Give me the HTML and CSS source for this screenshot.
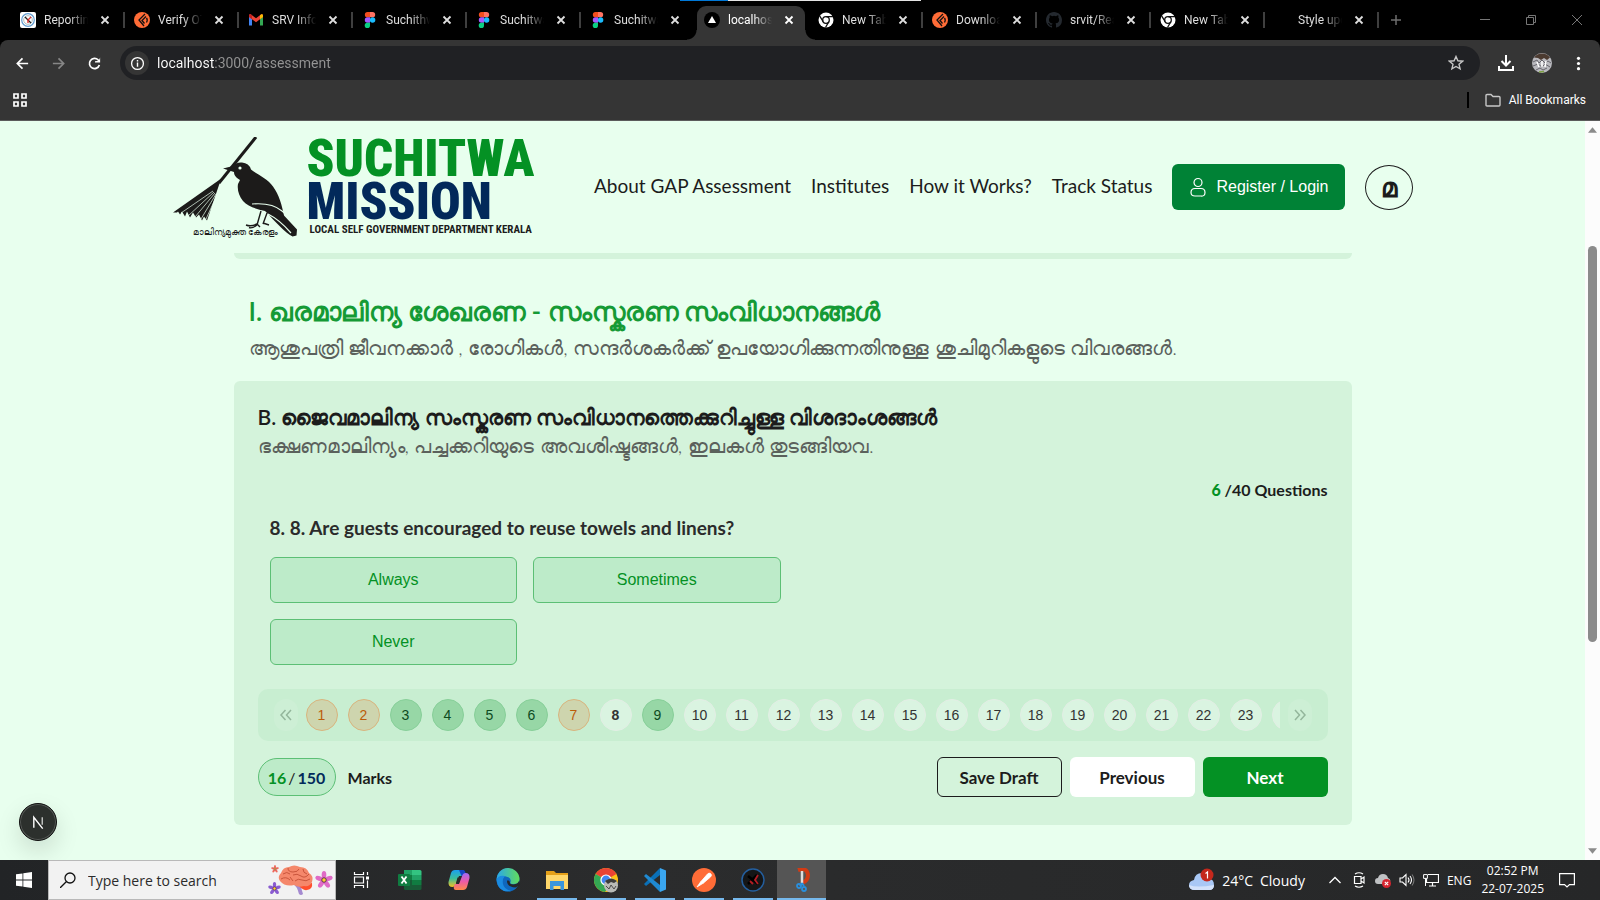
FILE: index.html
```html
<!DOCTYPE html>
<html lang="en">
<head>
<meta charset="utf-8">
<title>Suchitwa Mission - GAP Assessment</title>
<link rel="stylesheet" href="styles.css">
</head>
<body>
<svg class="defs" aria-hidden="true">
  <defs>
    <symbol id="i-close" viewBox="0 0 16 16"><path d="M4.5 4.5l7 7M11.500 4.500l-7 7" stroke="currentColor" stroke-width="1.800" fill="none"/></symbol>
    <symbol id="i-postman" viewBox="0 0 16 16"><circle cx="8" cy="8" r="8" fill="#ff6c37"/><path d="M11 2L5 8l5 6M12 4.500L8 8.500l2.500 3M12.500 6q1.500 2 0 4.500" stroke="#111" stroke-width="1.300" fill="none"/></symbol>
    <symbol id="i-figma" viewBox="0 0 16 16"><path d="M5.500 0H8v5.300H5.500a2.650 2.650 0 0 1 0-5.300z" fill="#f24e1e"/><path d="M8 0h2.500a2.650 2.650 0 0 1 0 5.300H8z" fill="#ff7262"/><path d="M5.500 5.300H8v5.400H5.500a2.700 2.700 0 0 1 0-5.400z" fill="#a259ff"/><circle cx="10.600" cy="8" r="2.700" fill="#1abcfe"/><path d="M5.500 10.700H8v2.600a2.650 2.650 0 1 1-2.500-2.600z" fill="#0acf83"/></symbol>
    <symbol id="i-chromew" viewBox="0 0 16 16"><circle cx="8" cy="8" r="7.500" fill="#fff"/><circle cx="8" cy="8" r="3.300" fill="none" stroke="#111" stroke-width="1.300"/><path d="M8 4.700h7M5.200 9.700L1.600 3.900M10.800 9.700L7.500 15.500" stroke="#111" stroke-width="1.300"/></symbol>
    <symbol id="i-gmail" viewBox="0 0 16 16"><path d="M1 4v9.500h3V7z" fill="#4285f4"/><path d="M15 4v9.500h-3V7z" fill="#34a853"/><path d="M1 3.500Q1 2 2.700 2.300L8 6.300l5.300-4Q15 2 15 3.500V5L8 10.200 1 5z" fill="#ea4335"/><path d="M12 3.300l1.300-1Q15 2 15 3.500V5l-3 2.300z" fill="#fbbc04"/><path d="M1 3.500Q1 2 2.700 2.300L4 3.300v4L1 5z" fill="#c5221f"/></symbol>
    <symbol id="i-chrome" viewBox="0 0 26 26"><circle cx="13" cy="13" r="12" fill="#fbc116"/><path d="M13 13L2.600 7A12 12 0 0 1 23.400 7z" fill="#ea4335"/><path d="M13 13L2.600 7A12 12 0 0 0 12 25l5-8z" fill="#34a853"/><circle cx="13" cy="13" r="5.600" fill="#fff"/><circle cx="13" cy="13" r="4.400" fill="#4285f4"/></symbol>
    <symbol id="i-flower" viewBox="0 0 20 20"><g fill="currentColor"><ellipse cx="10" cy="4.500" rx="2.600" ry="4.500"/><ellipse cx="10" cy="4.500" rx="2.600" ry="4.500" transform="rotate(72 10 10)"/><ellipse cx="10" cy="4.500" rx="2.600" ry="4.500" transform="rotate(144 10 10)"/><ellipse cx="10" cy="4.500" rx="2.600" ry="4.500" transform="rotate(216 10 10)"/><ellipse cx="10" cy="4.500" rx="2.600" ry="4.500" transform="rotate(288 10 10)"/></g><circle cx="10" cy="10" r="2.500" fill="#ffd02e" stroke="#4a2a50"/></symbol>
  </defs>
</svg>

<div class="titlebar">
  <div class="progress"></div>
  <div class="tab sep"><svg class="fav" viewBox="0 0 16 16"><rect width="16" height="16" rx="2" fill="#fff"/><circle cx="8" cy="8" r="6.300" fill="none" stroke="#5f9bd0" stroke-width="1.200"/><circle cx="8" cy="8" r="4.300" fill="none" stroke="#9aa" stroke-width=".8"/><path d="M5 5l6 6" stroke="#222" stroke-width="1.300"/><path d="M11 5L8 8v3" stroke="#d33" stroke-width="1.400" fill="none"/></svg><button class="name">Reporting</button><button class="x" aria-label="Close tab"><svg><use href="#i-close"/></svg></button></div>
  <div class="tab sep"><svg class="fav"><use href="#i-postman"/></svg><button class="name">Verify OTP</button><button class="x" aria-label="Close tab"><svg><use href="#i-close"/></svg></button></div>
  <div class="tab sep"><svg class="fav"><use href="#i-gmail"/></svg><button class="name">SRV Infotech</button><button class="x" aria-label="Close tab"><svg><use href="#i-close"/></svg></button></div>
  <div class="tab sep"><svg class="fav"><use href="#i-figma"/></svg><button class="name">Suchithwa</button><button class="x" aria-label="Close tab"><svg><use href="#i-close"/></svg></button></div>
  <div class="tab sep"><svg class="fav"><use href="#i-figma"/></svg><button class="name">Suchitwa</button><button class="x" aria-label="Close tab"><svg><use href="#i-close"/></svg></button></div>
  <div class="tab"><svg class="fav"><use href="#i-figma"/></svg><button class="name">Suchitwa</button><button class="x" aria-label="Close tab"><svg><use href="#i-close"/></svg></button></div>
  <div class="tab active"><svg class="fav" viewBox="0 0 16 16"><circle cx="8" cy="8" r="8" fill="#000"/><path d="M8 4l4 7H4z" fill="#fff"/></svg><button class="name">localhost</button><button class="x" aria-label="Close tab"><svg><use href="#i-close"/></svg></button></div>
  <div class="tab sep"><svg class="fav"><use href="#i-chromew"/></svg><button class="name">New Tab</button><button class="x" aria-label="Close tab"><svg><use href="#i-close"/></svg></button></div>
  <div class="tab sep"><svg class="fav"><use href="#i-postman"/></svg><button class="name">Download</button><button class="x" aria-label="Close tab"><svg><use href="#i-close"/></svg></button></div>
  <div class="tab sep"><svg class="fav" viewBox="0 0 16 16"><path fill="#24292f" d="M8 0C3.580 0 0 3.580 0 8c0 3.540 2.290 6.530 5.470 7.590.4.070.55-.17.55-.38v-1.490c-2.010.37-2.530-.49-2.690-.94-.09-.23-.48-.94-.82-1.130-.28-.15-.68-.52-.01-.53.63-.01 1.080.58 1.230.82.72 1.210 1.870.87 2.330.66.07-.52.28-.87.51-1.070-1.780-.2-3.640-.89-3.640-3.950 0-.87.31-1.590.82-2.150-.08-.2-.36-1.020.08-2.120 0 0 .67-.21 2.200.82a7.600 7.600 0 0 1 4 0c1.530-1.040 2.200-.82 2.200-.82.44 1.100.16 1.920.08 2.120.51.560.82 1.270.82 2.150 0 3.070-1.870 3.750-3.650 3.950.29.25.54.73.54 1.480v2.200c0 .21.15.46.55.38A8 8 0 0 0 16 8c0-4.420-3.580-8-8-8z"/></svg><button class="name">srvit/React</button><button class="x" aria-label="Close tab"><svg><use href="#i-close"/></svg></button></div>
  <div class="tab sep"><svg class="fav"><use href="#i-chromew"/></svg><button class="name">New Tab</button><button class="x" aria-label="Close tab"><svg><use href="#i-close"/></svg></button></div>
  <div class="tab sep"><svg class="fav"></svg><button class="name">Style update</button><button class="x" aria-label="Close tab"><svg><use href="#i-close"/></svg></button></div>
  <button class="newtab" aria-label="New tab"><svg viewBox="0 0 16 16"><path d="M8 3v10M3 8h10" stroke="currentColor" stroke-width="1.500"/></svg></button>
  <div class="winctl">
    <button aria-label="Minimize"><svg viewBox="0 0 12 12"><path d="M1 5.500h10" stroke="currentColor"/></svg></button>
    <button aria-label="Restore"><svg viewBox="0 0 12 12"><path d="M1.500 3.500h7v7h-7zM3.500 3.500v-2h7v7h-2" stroke="currentColor" fill="none"/></svg></button>
    <button aria-label="Close"><svg viewBox="0 0 12 12"><path d="M1 1l10 10M11 1L1 11" stroke="currentColor"/></svg></button>
  </div>
</div>

<div class="chrome">
  <div class="toolbar">
    <button class="tool" aria-label="Back"><svg viewBox="0 0 16 16"><path d="M14 8H3M8 2.500L2.500 8 8 13.500" stroke="#fff" stroke-width="1.800" fill="none"/></svg></button>
    <button class="tool" aria-label="Forward"><svg viewBox="0 0 16 16"><path d="M2 8h11M8 2.500L13.500 8 8 13.500" stroke="#868686" stroke-width="1.800" fill="none"/></svg></button>
    <button class="tool" aria-label="Reload"><svg viewBox="0 0 16 16"><path d="M13.200 9.500A5.400 5.400 0 1 1 12 4.300l1.300 1.400" stroke="#fff" stroke-width="1.800" fill="none"/><path d="M14 1.500V7H8.500V5.500L12.500 5z" fill="#fff"/></svg></button>
    <div class="omnibox">
      <span class="site"><svg viewBox="0 0 16 16"><circle cx="8" cy="8" r="6.300" stroke="#fff" stroke-width="1.400" fill="none"/><path d="M8 7v4.500M8 4.300v1.600" stroke="#fff" stroke-width="1.500"/></svg></span>
      <input class="url" type="text" aria-label="Address" value="localhost:3000/assessment">
      <button class="star" aria-label="Bookmark"><svg viewBox="0 0 16 16"><path d="M8 1.500l1.900 4.300 4.700.4-3.600 3.100 1.100 4.600L8 11.500l-4.100 2.400L5 9.300 1.400 6.200l4.700-.4z" stroke="#c7c7c7" stroke-width="1.400" fill="none"/></svg></button>
    </div>
    <button class="tool" aria-label="Downloads"><svg class="dl" viewBox="0 0 18 18"><path d="M9 1v10M4.500 7L9 11.500 13.500 7M2 12v4h14v-4" stroke="#fff" stroke-width="2" fill="none"/></svg></button>
    <button class="tool" aria-label="Profile"><svg class="av" viewBox="0 0 20 20"><circle cx="10" cy="10" r="10" fill="#b9b9be"/><path d="M2 4.500A10 10 0 0 1 18 4.500L15 7 12 5 9 7 6 5z" fill="#4b3a30"/><path d="M1 9l4-2 2 3 3-3 3 3 3-2 3 2M1 13l5-2 4 3 3-3 5 3M4 17l4-2 3 2 4-2" stroke="#68666d" fill="none"/><path d="M5 9l2 5M10 8v6M14 8l-1 6" stroke="#fff" stroke-width="1.500"/><path d="M7 19l5-.5" stroke="#7da044" stroke-width="1.500"/></svg></button>
    <button class="tool" aria-label="Menu"><svg viewBox="0 0 16 16" fill="#fff"><circle cx="8" cy="2.500" r="1.700"/><circle cx="8" cy="8" r="1.700"/><circle cx="8" cy="13.500" r="1.700"/></svg></button>
  </div>
  <div class="bookmarks">
    <button class="apps" aria-label="Apps"><svg viewBox="0 0 14 14"><path d="M1 1h4v4H1zM9 1h4v4H9zM1 9h4v4H1zM9 9h4v4H9z" stroke="#fff" stroke-width="1.700" fill="none"/></svg></button>
    <button class="allbm"><svg viewBox="0 0 16 14"><path d="M1 2.500q0-1 1-1h4l2 2h6q1 0 1 1V12q0 1-1 1H2q-1 0-1-1z" stroke="#c7c7c7" stroke-width="1.400" fill="none"/></svg>All Bookmarks</button>
  </div>
</div>

<div class="viewport">
  <div class="page">
    <header class="header">
      <div class="header-in">
        <a class="logo" href="#" aria-label="Suchitwa Mission">
          <span class="emblem">
            <svg viewBox="0 0 124 100">
              <path d="M83 0L46 46" stroke="#1c1b1a" stroke-width="3"/>
              <path d="M49 41L0 75.500l4 0 1-1 2 3 2-3 3 5 2-5 3 6 3-5 3 5 3-3 3 6 2-4 3 4L46 48z" fill="#1c1b1a"/>
              <path d="M40 54L8 76M41 55L15 79M42 56L22 80M43 57L28 82M44 58L33 82" stroke="#e8ffee" stroke-width=".7"/>
              <path d="M50 31.500L60 29q3-4 9-3.500 7 .5 9 7c6 5 17 9 22 17 6 8 9 19 11 29l13 14-.5 6-4 1C112 96 103 85 92 74c-8-2-17-4-22-10-4-5-6-11-5-17l2-4c-3-2-6-4-6-8z" fill="#1c1b1a"/>
              <circle cx="67" cy="31" r="1.600" fill="#e8ffee"/>
              <path d="M79 67c12-1 23 1 30 7 5 4 9 9 14 14M95 77c8 4 17 12 23 19" stroke="#e8ffee" stroke-width="1.200" fill="none"/>
              <path d="M88 74l-4 14M94 76l-4 11M84 87q-6 3-11 1M84 88q-5 4-8 2.500M90 86l6 2M84 87l3 3" stroke="#1c1b1a" stroke-width="1.400" fill="none"/>
            </svg>
            <span class="motto">മാലിന്യമുക്ത കേരളം</span>
          </span>
          <span class="wordmark">
            <span class="w1">SUCHITWA</span>
            <span class="w2">MISSION</span>
            <span class="w3">LOCAL SELF GOVERNMENT DEPARTMENT KERALA</span>
          </span>
        </a>
        <nav class="nav">
          <a href="#">About GAP Assessment</a>
          <a href="#">Institutes</a>
          <a href="#">How it Works?</a>
          <a href="#">Track Status</a>
          <button class="login"><svg viewBox="0 0 16 20"><circle cx="8" cy="5.500" r="4" fill="none" stroke="#fff" stroke-width="1.200"/><path d="M1 15.500Q1 11.500 5 11.500h6q4 0 4 4T11 19H5q-4 0-4-3.500z" fill="none" stroke="#fff" stroke-width="1.200"/></svg>Register / Login</button>
          <button class="lang" aria-label="Malayalam">മ</button>
        </nav>
      </div>
    </header>
    <main class="main">
      <div class="prev-card"></div>
      <section class="intro">
        <h1>I. ഖരമാലിന്യ ശേഖരണ - സംസ്കരണ സംവിധാനങ്ങൾ</h1>
        <p>ആശുപത്രി ജീവനക്കാർ , രോഗികൾ, സന്ദർശകർക്ക് ഉപയോഗിക്കുന്നതിനുള്ള ശുചിമുറികളുടെ വിവരങ്ങൾ.</p>
      </section>
      <section class="card">
        <h2>B. ജൈവമാലിന്യ സംസ്കരണ സംവിധാനത്തെക്കുറിച്ചുള്ള വിശദാംശങ്ങൾ</h2>
        <p class="sub">ഭക്ഷണമാലിന്യം, പച്ചക്കറിയുടെ അവശിഷ്ടങ്ങൾ, ഇലകൾ തുടങ്ങിയവ.</p>
        <p class="count"><b>6</b> /40 Questions</p>
        <div class="question">
          <h3>8. 8. Are guests encouraged to reuse towels and linens?</h3>
          <div class="options">
            <button>Always</button>
            <button>Sometimes</button>
            <button>Never</button>
          </div>
        </div>
        <div class="pager">
          <button class="arrow" aria-label="Back"><svg viewBox="0 0 14 14"><path d="M6.500 2L2 7l4.500 5M12 2L7.500 7l4.500 5" stroke="currentColor" stroke-width="1.500" fill="none"/></svg></button>
          <div class="nums">
            <button class="skip">1</button><button class="skip">2</button><button class="done">3</button><button class="done">4</button><button class="done">5</button><button class="done">6</button><button class="skip">7</button><button class="cur">8</button><button class="done">9</button><button>10</button><button>11</button><button>12</button><button>13</button><button>14</button><button>15</button><button>16</button><button>17</button><button>18</button><button>19</button><button>20</button><button>21</button><button>22</button><button>23</button><button aria-label="24"></button>
          </div>
          <button class="arrow" aria-label="Forward"><svg viewBox="0 0 14 14"><path d="M2 2l4.500 5L2 12M7.500 2L12 7l-4.500 5" stroke="currentColor" stroke-width="1.500" fill="none"/></svg></button>
        </div>
        <div class="actions">
          <span class="score"><b class="got">16</b>/<b class="max">150</b></span>
          <span class="marks">Marks</span>
          <button class="btn draft">Save Draft</button>
          <button class="btn prev">Previous</button>
          <button class="btn next">Next</button>
        </div>
      </section>
    </main>
    <button class="nextdev" aria-label="Developer tools"><svg viewBox="0 0 16 16"><path d="M3 13.500V2.500l9.500 12" stroke="#fff" stroke-width="1.500" fill="none"/><path d="M12 2.500v8" stroke="#c5c8c6" stroke-width="1.500"/></svg></button>
  </div>
  <div class="scroll"><svg viewBox="0 0 10 6"><path d="M5 0l5 6H0z" fill="#8b8b8b"/></svg><div class="thumb"></div><div class="rest"></div><svg viewBox="0 0 10 6"><path d="M0 0h10L5 6z" fill="#8b8b8b"/></svg></div>
</div>

<footer class="taskbar">
  <button class="start" aria-label="Start"><svg viewBox="0 0 16 16" fill="#fff"><path d="M0 2.300L6.500 1.400V7.600H0zM7.300 1.300L16 0v7.600H7.300zM0 8.400h6.500v6.200L0 13.700zM7.300 8.400H16V16l-8.700-1.200z"/></svg></button>
  <label class="search">
    <svg class="mag" viewBox="0 0 16 16"><circle cx="10" cy="6" r="5" fill="none" stroke="#111" stroke-width="1.300"/><path d="M6.500 9.500L0 16" stroke="#111" stroke-width="1.300"/></svg>
    <input type="text" placeholder="Type here to search" aria-label="Type here to search">
    <svg class="brain" viewBox="0 0 66 32">
      <path d="M25 20q4 2 6 10 2 2 4 0-2-5-2-10z" fill="#a58ad0"/>
      <path d="M29 20q6 7 10 6 6-1 5-7z" fill="#ff4f2e"/>
      <path d="M12 17q-3-4 1-8 2-6 8-6 5-3 11 0 7 0 9 6 5 3 3 9-2 5-8 4-6 2-10-1-9 2-14-4z" fill="#f5876b"/>
      <path d="M15 10q4-3 7 0M20 4q0 4 5 4t6-3M13 15q5-3 9 1M25 11q4-2 8 1t8-2M27 17q3-3 7-1t8-1M22 13l3 4M35 5q0 4 4 5" stroke="#c9553c" fill="none"/>
      <svg x="3" y="1" width="8" height="8" color="#ef6a5d"><use href="#i-flower"/></svg>
      <svg x="0" y="18" width="13" height="13" color="#8a5bd0"><use href="#i-flower"/></svg>
      <svg x="47" y="7" width="18" height="18" color="#e06ac6"><use href="#i-flower"/></svg>
    </svg>
  </label>
  <div class="dock">
    <button aria-label="Task view"><svg class="s16" viewBox="0 0 16 16"><path d="M1.500 0v2.500h9V0M1.500 5h9v6h-9zM1.500 16v-2.500h9V16M14.500 0v3M14.500 8.500V16" stroke="#fff" stroke-width="1.200" fill="none"/><path d="M13 4.500h3v3h-3z" fill="#fff"/></svg></button>
    <button aria-label="Excel"><svg viewBox="0 0 24 24"><path d="M6 2h8v5H6z" fill="#21a366"/><path d="M14 2h8q1.500 0 1.500 1.500V7H14z" fill="#33c481"/><path d="M6 7h8v5H6z" fill="#107c41"/><path d="M14 7h9.500v5H14z" fill="#21a366"/><path d="M6 12h8v10H7.500Q6 22 6 20.500z" fill="#185c37"/><path d="M14 12h9.500v5H14z" fill="#107c41"/><path d="M14 17h9.500v3.500Q23.500 22 22 22h-8z" fill="#185c37"/><rect y="6" width="12" height="12" rx="1" fill="#107c41"/><path d="M3.500 8.500l5 7M8.500 8.500l-5 7" stroke="#fff" stroke-width="1.800"/></svg></button>
    <button aria-label="Copilot"><svg viewBox="0 0 24 24"><defs><linearGradient id="g1" x2="0" y2="1"><stop stop-color="#1aa0f0"/><stop offset=".5" stop-color="#3bbf9b"/><stop offset="1" stop-color="#f6c321"/></linearGradient><linearGradient id="g2" x2="0" y2="1"><stop stop-color="#a36bf4"/><stop offset=".5" stop-color="#ec5aa8"/><stop offset="1" stop-color="#ff8a4a"/></linearGradient></defs><path d="M8 2h7q3 0 2 4l-1 2h-4L8.500 17q-1 2-3 2Q1 19 1.500 14L4 5q1-3 4-3z" fill="url(#g1)"/><path d="M12 2h4q2 0 2.500 3l1 3h-5z" fill="#1746c7"/><path d="M16 22H9q-3 0-2-4l1-2h4l3.500-9q1-2 3-2 4.500 0 4 5L20 19q-1 3-4 3z" fill="url(#g2)"/><path d="M10.500 9.500h3L12 15h-3z" fill="#2a2a2b"/></svg></button>
    <button aria-label="Edge"><svg viewBox="0 0 24 24"><defs><linearGradient id="g3"><stop stop-color="#2aa7ea"/><stop offset="1" stop-color="#62dd5b"/></linearGradient></defs><circle cx="12" cy="12" r="11.500" fill="#0f67bd"/><path d="M.5 12A11.500 11.500 0 0 1 23.500 11q0 5-6 5-4 0-3-2 1-4-3-5Q4 6 .5 12z" fill="url(#g3)"/><path d="M.5 12Q3 6.500 9 8q-3 3-2 8t8 7Q2 25 .5 12z" fill="#1b8be0"/><path d="M14 14q-1 2 3.500 2.500Q22 16 23 13l1 4-4.500 2.500Q11 19 11 13q1-2 3 1z" fill="#262728"/></svg></button>
    <button class="open" aria-label="File Explorer"><svg viewBox="0 0 24 24"><path d="M1 3h8l2 2h12v16H1z" fill="#e5a019"/><path d="M1 7h22v14H1z" fill="#ffd76a"/><path d="M5 13h14v9h-3.500v-4h-7v4H5z" fill="#3a96dd"/></svg></button>
    <button class="open" aria-label="Chrome"><svg class="s26" viewBox="0 0 26 26"><use href="#i-chrome"/><circle cx="18" cy="18.500" r="7" fill="#b9bab6"/><path d="M12 14q6-5 12 0l-3 2-3-1-3 2z" fill="#3b3b39"/><path d="M13 19l3 3 2-4 3 4 2-3" stroke="#4b4b4b" fill="none"/></svg></button>
    <button class="open" aria-label="VS Code"><svg viewBox="0 0 24 24"><path d="M17 0v7L3 18l-2-2z" fill="#0a70b8"/><path d="M17 24v-7L3 6 1 8z" fill="#1f8ad2"/><path d="M17 0l6 2.500v19L17 24z" fill="#3aa6f0"/></svg></button>
    <button class="open" aria-label="Postman"><svg viewBox="0 0 24 24"><circle cx="12" cy="12" r="12" fill="#ff6c37"/><path d="M18.500 5.500q2 1.500 0 3.500l-7 6-3-1 7-8q1.500-1.500 3-.5zM8.500 14L5 19l6.500-4" stroke="#fff" fill="#fff" stroke-width=".8"/></svg></button>
    <button class="open" aria-label="X Tools"><svg viewBox="0 0 24 24"><circle cx="12" cy="12" r="11" fill="#151617" stroke="#245f9f" stroke-width="1.500"/><path d="M7 8l10 8M16 7l-9 9" stroke="#000" stroke-width="2.500"/><path d="M17 7l-3 5 3 4M9 13l3 3" stroke="#b51d24" stroke-width="1.800" fill="none"/></svg></button>
    <button class="open focus" aria-label="Snipping Tool"><svg viewBox="0 0 24 24"><path d="M8 2q9-3 10 5 0 6-6 8" stroke="#d23b14" stroke-width="4" fill="none"/><path d="M12 3v12" stroke="#ddd" stroke-width="2.500"/><path d="M12 15l-2 3M12 15l2 3" stroke="#2a8fdc" stroke-width="2"/><circle cx="9" cy="18" r="2" fill="none" stroke="#2a8fdc" stroke-width="1.800"/><circle cx="14" cy="21" r="2" fill="none" stroke="#2a8fdc" stroke-width="1.800"/></svg></button>
  </div>
  <div class="tray">
    <button class="weather"><svg viewBox="0 0 26 24"><path d="M6 22q-6 0-6-5 0-4 5-5 1-7 8-7 6 0 7 6 5 0 5 6 0 5-5 5z" fill="#a9c8f5"/><path d="M6 22q-6 0-6-5 8 3 25 0 0 5-5 5z" fill="#d3e2fa"/><circle cx="18" cy="7" r="6.500" fill="#c4281c"/><path d="M16.500 5.500L18.500 4v6.500" stroke="#fff" stroke-width="1.200" fill="none"/></svg><span>24°C</span><span>Cloudy</span></button>
    <button aria-label="Hidden icons"><svg class="s16" viewBox="0 0 16 16"><path d="M2.500 11L8 5.500l5.500 5.500" stroke="#fff" stroke-width="1.300" fill="none"/></svg></button>
    <button aria-label="Meet now"><svg class="s16" viewBox="0 0 16 16"><path d="M3.500 4.500h6.500v7H3.500zM10 7l3-2v6l-3-2M4 2q4-2.500 8 0M4 14q4 2.500 8 0" stroke="#fff" stroke-width="1.200" fill="none"/></svg></button>
    <button aria-label="OneDrive"><svg class="s16" viewBox="0 0 16 16"><path d="M3 12q-3 0-3-3t3-3q1-4 5-4 4 0 5 4 3 1 2 4t-4 2z" fill="#bfc1c3"/><circle cx="11.500" cy="11.500" r="4.500" fill="#d6242f"/><path d="M9.800 9.800l3.400 3.400M13.200 9.800l-3.400 3.400" stroke="#fff" stroke-width="1.100"/></svg></button>
    <button aria-label="Volume"><svg class="s16" viewBox="0 0 16 16"><path d="M1 6h2.500L7 2.500v11L3.500 10H1zM9 5.500q2 2.500 0 5M11 4q3 4 0 8" stroke="#fff" stroke-width="1.100" fill="none"/><path d="M13 2.500q4 5.500 0 11" stroke="#777" stroke-width="1.100" fill="none"/></svg></button>
    <button aria-label="Network"><svg class="s16" viewBox="0 0 16 16"><path d="M3.500 2.500H15.500v8H3.500zM9.500 10.500V14M6 14h7" stroke="#fff" stroke-width="1.200" fill="none"/><path d="M0 2h5v5H0z" fill="#262728"/><path d="M.6 2.600h3.800v3.800H.6zM2.500 6.500V14" stroke="#fff" fill="none"/></svg></button>
    <button class="ime">ENG</button>
    <button class="clock"><span>02:52 PM</span><span>22-07-2025</span></button>
    <button class="note" aria-label="Notifications"><svg class="s16" viewBox="0 0 16 16"><path d="M.6 1.600h14.800v11H10.500L8 15l-2.500-2.400H.6z" stroke="#fff" stroke-width="1.200" fill="none"/></svg></button>
  </div>
</footer>
</body>
</html>
```

FILE: styles.css
```css
* { box-sizing: border-box; }
body {
  margin: 0;
  height: 100vh;
  display: flex;
  flex-direction: column;
  overflow: hidden;
  background: #000;
  font-family: Lato, "Noto Sans", sans-serif;
}
button { font: inherit; color: inherit; background: none; border: 0; padding: 0; margin: 0; }
input { font: inherit; border: 0; outline: 0; background: none; padding: 0; min-width: 0; }
a { color: inherit; text-decoration: none; }
h1, h2, h3, p { margin: 0; }
svg { display: block; flex: none; }
.defs { position: absolute; width: 0; height: 0; }

/* tab strip */
.titlebar { position: relative; display: flex; align-items: flex-end; height: 40px; flex: none; padding-left: 11px; background: #000; color: #dedede; font-family: Roboto, sans-serif; font-size: 12px; }
.progress { position: absolute; top: 0; left: 680px; width: 241px; height: 1px; background: linear-gradient(90deg, #0078d7 48px, #e5e5e5 48px); }
.tab { position: relative; display: flex; align-items: center; width: 114px; height: 34px; padding: 0 12px 6px 9px; flex: 0 1 114px; }
.tab.sep { background: linear-gradient(#3f3f3f, #3f3f3f) no-repeat right 6px / 2px 16px; }
.fav { width: 16px; height: 16px; margin-right: 8px; }
.name { flex: 1; min-width: 0; height: 20px; line-height: 20px; text-align: left; white-space: nowrap; overflow: hidden; mask-image: linear-gradient(90deg, #000 55%, transparent 98%); }
.x { margin-left: 8px; width: 16px; }
.x svg { width: 16px; height: 16px; }
.active { color: #fff; }
.active::before { content: ""; position: absolute; inset: 0 4px 0 2px; background: #353535; border-radius: 9px 9px 0 0; }
.active::after { content: ""; position: absolute; bottom: 0; left: -8px; right: -6px; height: 10px; background: radial-gradient(circle at 0 0, transparent 9px, #353535 10px) left / 10px 10px no-repeat, radial-gradient(circle at 100% 0, transparent 9px, #353535 10px) right / 10px 10px no-repeat; }
.active > * { position: relative; }
.newtab { width: 34px; height: 40px; display: grid; place-items: center; color: #6e6e6e; }
.newtab svg { width: 16px; height: 16px; }
.winctl { display: flex; margin-left: auto; align-self: center; color: #777; }
.winctl button { width: 46px; display: grid; place-items: center; }
.winctl svg { width: 12px; height: 12px; }

/* toolbar */
.chrome { flex: none; height: 81px; background: #353535; border-radius: 8px 8px 0 0; border-bottom: 1px solid #5b5b5b; }
.toolbar { display: flex; align-items: center; height: 46px; padding: 0 4px; }
.tool { width: 36px; height: 36px; display: grid; place-items: center; }
.tool svg { width: 15px; height: 15px; }
.tool svg.dl { width: 18px; height: 18px; }
.tool svg.av { width: 20px; height: 20px; }
.omnibox { flex: 1; display: flex; align-items: center; height: 34px; margin: 0 8px; padding: 0 16px 0 5px; border-radius: 17px; background: #202124; }
.site { width: 24px; height: 24px; border-radius: 50%; background: #353535; display: grid; place-items: center; }
.site svg { width: 15px; height: 15px; }
.url { flex: 1; margin-left: 8px; font-family: Roboto, sans-serif; font-size: 14px; color: transparent; background: linear-gradient(90deg, #fff 57px, #949494 57px); -webkit-background-clip: text; background-clip: text; }
.star svg { width: 16px; height: 16px; }
.bookmarks { display: flex; align-items: center; justify-content: space-between; height: 28px; padding: 0 14px 0 13px; color: #fff; font-size: 12px; }
.apps svg { width: 14px; height: 14px; }
.allbm { display: flex; align-items: center; gap: 8px; height: 16px; padding-left: 16px; border-left: 2px solid #000; font-family: Roboto, sans-serif; }
.allbm svg { width: 16px; height: 14px; }

/* web page */
.viewport { flex: 1; display: flex; min-height: 0; background: #e8ffee; }
.page { position: relative; flex: 1; min-width: 0; overflow: hidden; color: #1c1c1c; }
.header { height: 132px; display: flex; justify-content: center; }
.header-in { width: 100%; max-width: 1240px; display: flex; justify-content: space-between; align-items: center; }
.logo { display: flex; gap: 10px; }
.emblem { position: relative; width: 124px; }
.emblem svg { width: 124px; height: 100px; }
.motto { position: absolute; left: 20px; bottom: -1px; font-size: 9px; line-height: 12px; white-space: nowrap; }
.wordmark { display: flex; flex-direction: column; font-family: "Roboto Condensed", Roboto, sans-serif; font-weight: 900; white-space: nowrap; }
.w1 { font-size: 51px; line-height: 43px; color: #049124; }
.w2 { font-size: 51px; line-height: 43px; color: #02295a; }
.w3 { margin-left: 3px; font-size: 11px; line-height: 14px; font-weight: 700; }
.nav { display: flex; align-items: center; gap: 20px; font-size: 19px; line-height: 24px; white-space: nowrap; }
.nav a { padding-bottom: 2px; }
.login { display: flex; align-items: center; gap: 10px; height: 46px; padding: 0 16px 0 18px; border-radius: 6px; background: #008236; color: #fff; font-family: "Liberation Sans", Arial, sans-serif; font-size: 16px; }
.login svg { width: 16px; height: 20px; }
.lang { width: 48px; height: 45px; border: 1px solid #1c1c1c; border-radius: 50%; font-size: 26px; line-height: 36px; font-weight: 700; }
.main { max-width: 1118px; margin: 0 auto; }
.prev-card { height: 6px; background: #d4f3db; border-radius: 0 0 6px 6px; }
.intro { padding: 34px 15px 16px; }
.intro h1 { font-size: 26px; line-height: 36px; font-weight: 600; color: #159a35; white-space: nowrap; }
.intro p { font-size: 20px; line-height: 36px; font-weight: 300; color: #5b615c; white-space: nowrap; }
.card { padding: 22px 24px 28px; border-radius: 6px; background: #d4f3db; }
.card h2 { font-size: 21px; line-height: 28px; font-weight: 600; white-space: nowrap; }
.sub { font-size: 20px; line-height: 28px; font-weight: 300; color: #5b615c; white-space: nowrap; }
.count { margin-top: 19px; text-align: right; font-size: 16px; line-height: 24px; font-weight: 700; }
.count b { color: #049124; }
.question { padding: 12px; }
.question h3 { font-size: 19px; line-height: 28px; font-weight: 700; color: #2b2b2b; }
.options { display: grid; grid-template-columns: 1fr 1fr; gap: 16px; max-width: 511px; margin-top: 15px; }
.options button { height: 46px; border: 1px solid #5cbf75; border-radius: 6px; background: #bdebc9; color: #049124; font-family: "Liberation Sans", Arial, sans-serif; font-size: 16px; }
.pager { display: flex; align-items: center; gap: 8px; margin-top: 12px; padding: 10px 16px; border-radius: 10px; background: #c8eed1; font-family: "Liberation Sans", Arial, sans-serif; font-size: 14px; }
.arrow { width: 24px; height: 32px; flex: none; display: grid; place-items: center; border-radius: 12px; background: #cdefd5; color: #93b69b; }
.arrow svg { width: 14px; height: 14px; }
.nums { flex: 1; display: flex; gap: 10px; overflow: hidden; }
.nums button { flex: none; width: 32px; height: 32px; border-radius: 50%; border: 1px solid #e3eee5; background: #daf4e1; color: #333; }
.nums .skip { background: #ced5ae; border-color: #d8b47e; color: #bb5d0a; }
.nums .done { background: #97d7a6; border-color: #87cf99; color: #0e4b1f; }
.nums .cur { font-weight: 700; }
.actions { display: flex; align-items: center; gap: 8px; margin-top: 16px; font-size: 16px; font-weight: 700; }
.score { display: flex; align-items: center; justify-content: center; gap: 2px; width: 78px; height: 38px; border: 1px solid #5cbf75; border-radius: 19px; background: #bdebc9; font-weight: 400; }
.got { color: #049124; }
.max { color: #02295a; }
.marks { margin: 0 auto 0 4px; }
.btn { width: 125px; height: 40px; border-radius: 6px; font-size: 17px; }
.draft { border: 1px solid #1c1c1c; }
.prev { background: #fff; }
.next { background: #049124; color: #fff; }
.nextdev { position: absolute; left: 19px; bottom: 19px; width: 38px; height: 38px; border-radius: 50%; background: #2c302d; border: 1px solid #111; box-shadow: inset 0 0 0 1px #565a57, 0 10px 24px #0002; display: grid; place-items: center; }
.nextdev svg { width: 15px; height: 15px; }
.scroll { width: 15px; flex: none; display: flex; flex-direction: column; align-items: center; padding: 6px 0; background: #fcfcfc; }
.scroll svg { width: 9px; height: 6px; }
.thumb { width: 9px; flex: 396; margin-top: 113px; border-radius: 5px; background: #8b8b8b; }
.rest { flex: 206; }

/* taskbar */
.taskbar { flex: none; display: flex; height: 40px; background: linear-gradient(90deg, #222426, #2b2c2d 40%, #262728); color: #fff; font-family: "Open Sans", sans-serif; }
.start { width: 48px; display: grid; place-items: center; }
.start svg { width: 16px; height: 16px; }
.search { display: flex; align-items: center; width: 288px; padding: 0 1px 0 11px; background: #f2f2f2; border: 1px solid #b9b9b9; }
.mag { width: 16px; height: 16px; }
.search input { flex: 1; margin-left: 12px; font-size: 14px; }
.search input::placeholder { color: #2b2b2b; opacity: 1; }
.brain { width: 66px; height: 32px; }
.dock { display: flex; }
.dock button { width: 49px; display: grid; place-items: center; border-bottom: 2px solid transparent; border-top: 2px solid transparent; }
.dock svg { width: 24px; height: 24px; }
.dock svg.s26 { width: 26px; height: 26px; }
.dock .open { background: linear-gradient(#76b9ed, #76b9ed) no-repeat center bottom / 40px 2px border-box; }
.dock .focus { background: linear-gradient(#76b9ed, #76b9ed) no-repeat center bottom / 100% 2px border-box, #555; background-clip: border-box; }
.s16, .dock svg.s16 { width: 16px; height: 16px; }
.tray { display: flex; align-items: center; gap: 8px; margin-left: auto; padding-right: 25px; font-size: 12px; }
.weather { display: flex; align-items: center; gap: 7px; margin-right: 14px; font-size: 14px; }
.weather svg { width: 26px; height: 24px; }
.clock { display: flex; flex-direction: column; align-items: center; line-height: 18px; margin: 0 7px 0 2px; }
```
